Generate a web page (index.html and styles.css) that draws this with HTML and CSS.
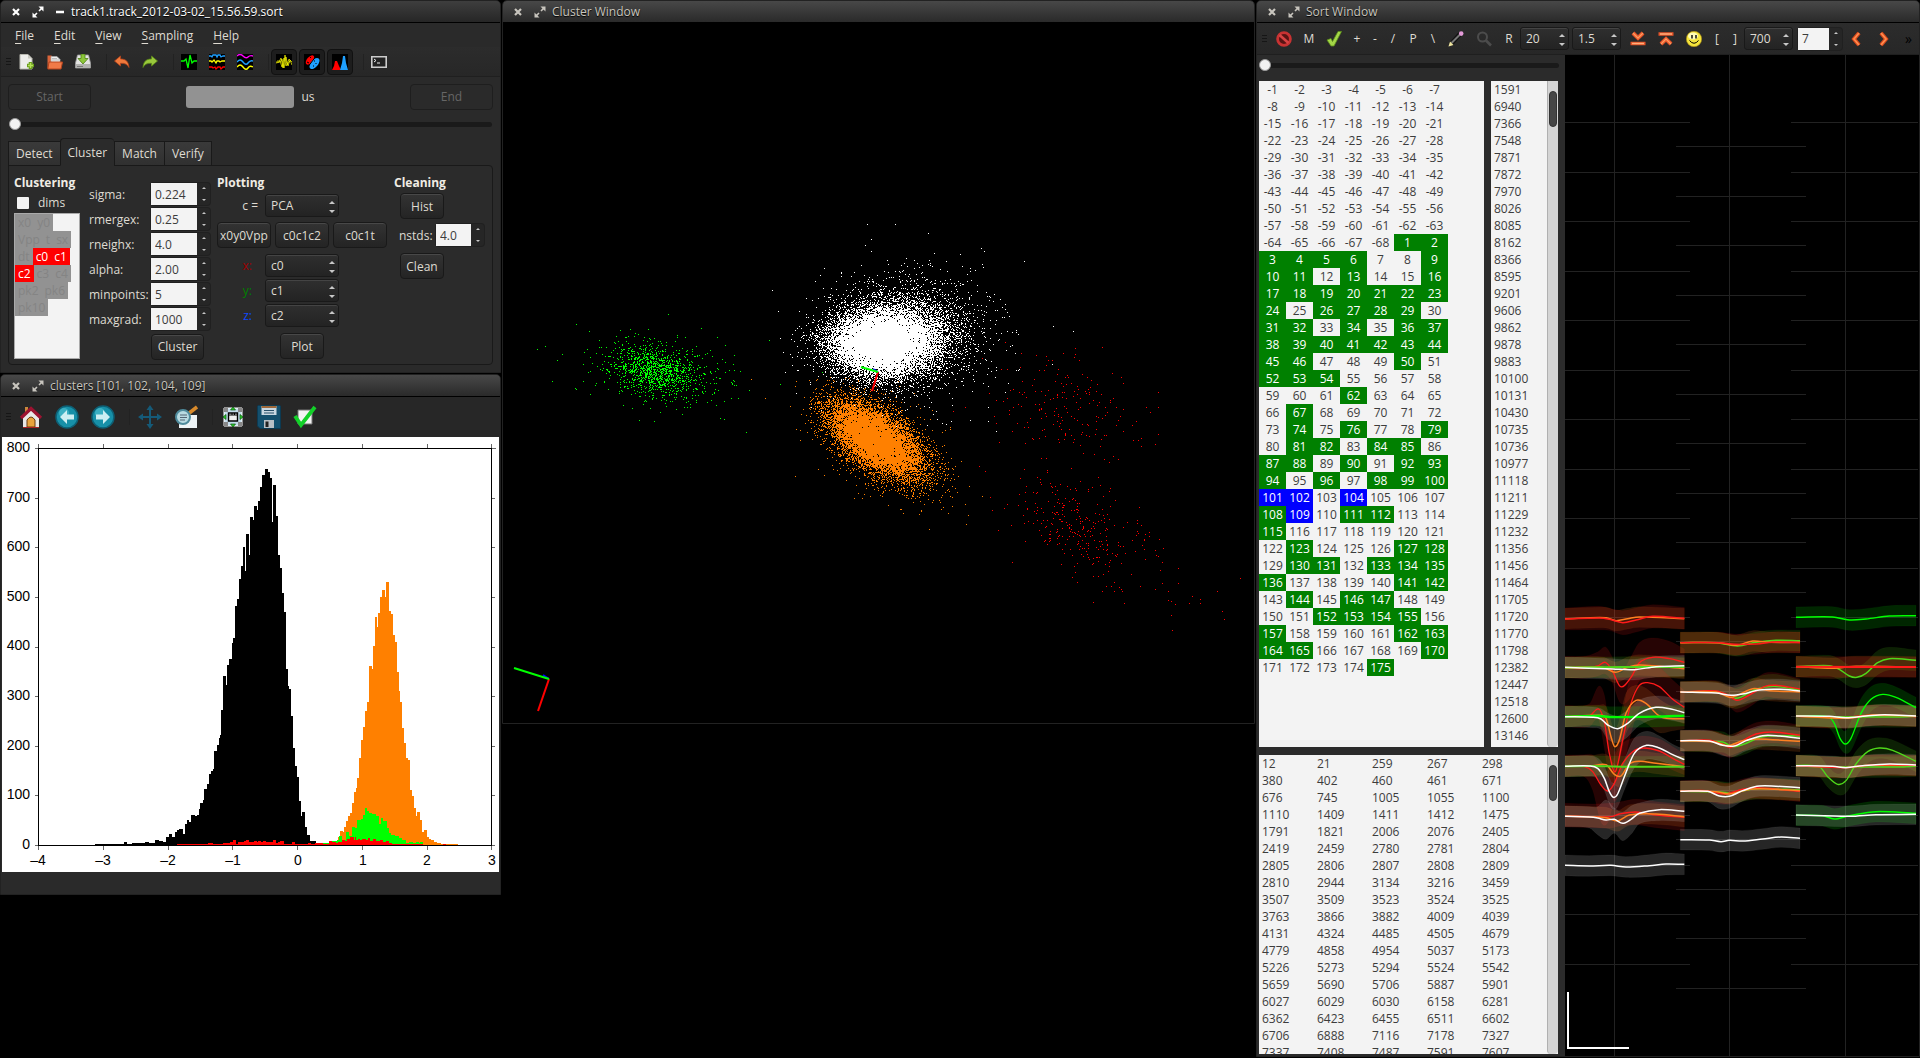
FILE: index.html
```html
<!DOCTYPE html>
<html lang="en">
<head>
<meta charset="utf-8">
<title>track1.track_2012-03-02_15.56.59.sort</title>
<link rel="stylesheet" href="styles.css">
</head>
<body>
<svg class="defs" aria-hidden="true">
  <symbol id="i-close" viewBox="0 0 10 10"><path d="M2 2l6 6M8 2l-6 6" stroke="currentColor" stroke-width="2.2"/></symbol>
  <symbol id="i-grow" viewBox="0 0 12 12"><path d="M6.500 0.500H11.500V5.500zM0.500 6.500V11.500H5.500z" fill="currentColor"/><path d="M9.500 2.500L7 5M2.500 9.500L5 7" stroke="currentColor" stroke-width="1.600"/></symbol>
  <symbol id="i-min" viewBox="0 0 10 10"><path d="M1 5h8" stroke="currentColor" stroke-width="2.400"/></symbol>
</svg>
<main class="desktop">
  <div class="side">
    <section class="window active">
      <header class="title"><svg><use href="#i-close"/></svg><svg class="big"><use href="#i-grow"/></svg><svg><use href="#i-min"/></svg><h1>track1.track_2012-03-02_15.56.59.sort</h1></header>
      <nav class="menu"><a href="#file"><u>F</u>ile</a><a href="#edit"><u>E</u>dit</a><a href="#view"><u>V</u>iew</a><a href="#sampling"><u>S</u>ampling</a><a href="#help"><u>H</u>elp</a></nav>
      <div class="toolbar">
        <span class="grip"></span>
        <button class="tool" aria-label="New"><svg viewBox="0 0 16 16"><path d="M1 .5h8l4 4V15H1z" fill="#ededea" stroke="#b8b8b0"/><path d="M9 .5v4h4z" fill="#c8c8c0"/><path d="M11.500 8v7M8 11.500h7" stroke="#6aa01c" stroke-width="3.600"/><path d="M11.500 9v5M9 11.500h5" stroke="#b6e05a" stroke-width="1.400"/></svg></button>
        <button class="tool" aria-label="Open"><svg viewBox="0 0 16 16"><path d="M.5 14V1.500h4l1 1.500H8V14z" fill="#d9643a"/><path d="M4 2.500h6l3 3V12H4z" fill="#eee" stroke="#aaa" stroke-width=".7"/><path d="M5 6h7M5 4.500h5" stroke="#bbb"/><path d="M2 8h13.500L14 15H.8z" fill="#f07a48" stroke="#b8441c"/></svg></button>
        <button class="tool" aria-label="Save"><svg viewBox="0 0 16 16"><path d="M2.500 1h11L15.500 9v5h-15V9z" fill="#e4e4e2" stroke="#999" stroke-width=".8"/><path d="M.8 10h14.400v4H.8z" fill="#b2b2b0"/><path d="M6 0h4v4.500h3L8 10 3 4.500h3z" fill="#8cc63a" stroke="#4d7d14" stroke-width=".8"/><path d="M2 12.500h6" stroke="#777"/></svg></button>
        <span class="sep"></span>
        <button class="tool" aria-label="Undo"><svg viewBox="0 0 16 16"><path d="M.5 7L6.500 2v3c5 0 8 2 8.500 8.500-1.500-3-4-4.500-8.500-4.200V12z" fill="#f07a3c" stroke="#b8441c" stroke-width=".8"/></svg></button>
        <button class="tool" aria-label="Redo"><svg viewBox="0 0 16 16"><path d="M15.500 7L9.500 2v3C4.500 5 1.500 7 1 13.500c1.500-3 4-4.500 8.500-4.200V12z" fill="#9ac83c" stroke="#5a8a18" stroke-width=".8"/></svg></button>
        <span class="sep"></span>
        <button class="tool" aria-label="Spikes"><svg viewBox="0 0 16 16"><path d="M0 0h16v16H0z"/><path d="M0 7h3l2-2 2 9 2-13 2 8 2-2h3" fill="none" stroke="#0f0" stroke-width="1.300"/></svg></button>
        <button class="tool" aria-label="Charts"><svg viewBox="0 0 16 16"><path d="M0 0h16v16H0z"/><g fill="none" stroke-width="1.300"><path d="M0 2h2l1 1 1-2h3l1 2 1-2h2l1 2 2-1h3" stroke="#1ea0ff"/><path d="M0 7h2l1 1 2-2 2 3 1-2h2l1 1 2-1h3" stroke="#ff0"/><path d="M0 13h3l1 1 2-1 1 2 2-2h2l1 2 2-2h2" stroke="#f00"/></g></svg></button>
        <button class="tool" aria-label="LFP"><svg viewBox="0 0 16 16"><path d="M0 0h16v16H0z"/><g fill="none" stroke-width="1.400"><path d="M0 2q3-3 6 0t5 1 5-1" stroke="#f0f"/><path d="M0 8q3-4 6 0t5 1 5-2" stroke="#1ea0ff"/><path d="M0 13q3-4 6 0t5 1 5-1" stroke="#ff0"/></g></svg></button>
        <span class="sep"></span>
        <button class="tool on" aria-label="Sort window"><svg viewBox="0 0 16 16"><path d="M0 0h16v16H0z"/><path d="M0 8h3l2-4 2 10L9 1l2 10 2-6 3 3M0 9l4-1 2-3 2 9 2-11 2 9 2-6 2 5M1 7h3l2 6 2-9 2 8 4-5" fill="none" stroke="#ff0" stroke-width=".7"/></svg></button>
        <button class="tool on" aria-label="Cluster window"><svg viewBox="0 0 16 16"><path d="M0 0h16v16H0z"/><ellipse cx="6" cy="6" rx="5.500" ry="3" transform="rotate(-50 6 6)" fill="#f00"/><ellipse cx="10.500" cy="9.500" rx="6.500" ry="3.600" transform="rotate(-50 10.500 9.500)" fill="#1ea0ff"/><path d="M3 14L13 1M3 8l2 1M6 3l1 1M10 7h1M12 9v1M9 12h1" stroke="#000"/></svg></button>
        <button class="tool on" aria-label="Histogram window"><svg viewBox="0 0 16 16"><path d="M0 0h16v16H0z"/><path d="M0 16l2-4 1-5h2l2 5 2 4z" fill="#f00"/><path d="M8 16l2-7 1-7h2l1 7 2 7z" fill="#1ea0ff"/></svg></button>
        <span class="sep"></span>
        <button class="tool" aria-label="Console"><svg viewBox="0 0 16 16"><path d="M.8 2.800h14.400v10.400H.8z" fill="#222" stroke="#ccc" stroke-width="1.600"/><path d="M3 5l2 1.500L3 8M6 9h3" fill="none" stroke="#eee"/></svg></button>
      </div>
      <div class="range">
        <button class="btn wide" disabled>Start</button>
        <label class="us"><input class="dead" disabled aria-label="Window position">us</label>
        <button class="btn wide" disabled>End</button>
      </div>
      <div class="slide"><input type="range" min="0" max="100" value="0" aria-label="Stream position"></div>
      <div class="tabs" role="tablist"><button role="tab">Detect</button><button role="tab" class="sel" aria-selected="true">Cluster</button><button role="tab">Match</button><button role="tab">Verify</button></div>
      <div class="panel">
        <div class="col">
          <h2>Clustering</h2>
          <label class="dims"><input type="checkbox">dims</label>
          <ul class="dimlist"><li>x0</li><li>y0</li><li>Vpp</li><li>t</li><li>sx</li><li>dt</li><li class="hot">c0</li><li class="hot">c1</li><li class="hot">c2</li><li>c3</li><li>c4</li><li>pk2</li><li>pk6</li><li>pk10</li></ul>
        </div>
        <div class="params">
          <label for="sigma">sigma:</label><span class="spin"><input id="sigma" value="0.224"></span>
          <label for="rmergex">rmergex:</label><span class="spin"><input id="rmergex" value="0.25"></span>
          <label for="rneighx">rneighx:</label><span class="spin"><input id="rneighx" value="4.0"></span>
          <label for="alpha">alpha:</label><span class="spin"><input id="alpha" value="2.00"></span>
          <label for="minpoints">minpoints:</label><span class="spin"><input id="minpoints" value="5"></span>
          <label for="maxgrad">maxgrad:</label><span class="spin"><input id="maxgrad" value="1000"></span>
          <button class="btn go">Cluster</button>
        </div>
        <div class="col">
          <h2>Plotting</h2>
          <div class="axis first"><label for="comp">c =</label><span class="combo"><select id="comp"><option>PCA</option></select></span></div>
          <div class="trio"><button class="btn">x0y0Vpp</button><button class="btn">c0c1c2</button><button class="btn">c0c1t</button></div>
          <div class="axes">
            <div class="axis"><label for="ax" class="x">x:</label><span class="combo"><select id="ax"><option>c0</option></select></span></div>
            <div class="axis"><label for="ay" class="y">y:</label><span class="combo"><select id="ay"><option>c1</option></select></span></div>
            <div class="axis"><label for="az" class="z">z:</label><span class="combo"><select id="az"><option>c2</option></select></span></div>
          </div>
          <button class="btn plot">Plot</button>
        </div>
        <div class="col clean">
          <h2>Cleaning</h2>
          <button class="btn">Hist</button>
          <div class="nstds"><label for="nstds">nstds:</label><span class="spin"><input id="nstds" value="4.0"></span></div>
          <button class="btn">Clean</button>
        </div>
      </div>
    </section>

    <section class="window">
      <header class="title"><svg><use href="#i-close"/></svg><svg class="big"><use href="#i-grow"/></svg><h1>clusters [101, 102, 104, 109]</h1></header>
      <div class="toolbar large">
        <span class="grip"></span>
        <button class="tool" aria-label="Home"><svg viewBox="0 0 24 24"><path d="M6 2h3v6H6z" fill="#c8893c"/><path d="M4 12l8-7 8 7v10.500H4z" fill="#e8e8e6"/><path d="M2 13L12 3.500 22 13" fill="none" stroke="#9c1230" stroke-width="3.200"/><path d="M8 22v-7q4-6 8 0v7z" fill="#e8a33c" stroke="#6a3a10"/><path d="M4 22.500h16" stroke="#a22" stroke-width="1.200"/></svg></button>
        <button class="tool" aria-label="Back"><svg viewBox="0 0 24 24"><circle cx="12" cy="12" r="11" fill="#1790a8" stroke="#0d5f74" stroke-width="1.500"/><circle cx="9" cy="8" r="5" fill="#54c4d4" opacity=".6"/><path d="M5 12l7-7v4.500h7v5h-7V19z" fill="#cdeef2"/></svg></button>
        <button class="tool" aria-label="Forward"><svg viewBox="0 0 24 24"><circle cx="12" cy="12" r="11" fill="#1790a8" stroke="#0d5f74" stroke-width="1.500"/><circle cx="9" cy="8" r="5" fill="#54c4d4" opacity=".6"/><path d="M19 12l-7-7v4.500H5v5h7V19z" fill="#cdeef2"/></svg></button>
        <span class="sep"></span>
        <button class="tool" aria-label="Pan"><svg viewBox="0 0 24 24"><path d="M12 2v20M2 12h20" stroke="#155a78" stroke-width="2"/><path d="M12 0l3.500 5h-7zM12 24l3.500-5h-7zM0 12l5-3.500v7zM24 12l-5-3.500v7z" fill="#155a78"/></svg></button>
        <button class="tool" aria-label="Zoom"><svg viewBox="0 0 24 24"><path d="M5 10h18v13H5z" fill="#eef4f6"/><path d="M14 9l9-7" stroke="#d98a2b" stroke-width="3.500"/><circle cx="9" cy="12" r="7" fill="#b9dbe2" stroke="#4f8b9c" stroke-width="2"/><path d="M6 10h7M6 12.500h7M6 15h5" stroke="#567" stroke-width="1.200"/></svg></button>
        <span class="sep"></span>
        <button class="tool" aria-label="Subplots"><svg viewBox="0 0 24 24"><path d="M3 3h18v18H3z" fill="#c4dcec" stroke="#fff"/><path d="M3 3h4v4H3zM17 3h4v4h-4zM3 17h4v4H3zM17 17h4v4h-4z" fill="#888"/><path d="M7.500 8h9v8h-9z" fill="#eee" stroke="#000" stroke-width="1.400"/><path d="M8 10h8M11 8v2M13.500 8v2" stroke="#000"/><path d="M12 2l2.500 3h-5zM12 22l2.500-3h-5zM2 12l3-2.500v5zM22 12l-3-2.500v5z" fill="#2ad02a" stroke="#084d08" stroke-width=".7"/></svg></button>
        <button class="tool" aria-label="Save figure"><svg viewBox="0 0 24 24"><path d="M.5 1.500q0-1 1-1h21q1 0 1 1v22H3l-2.500-2.500z" fill="#14506e" stroke="#0c3a52"/><path d="M4.500 1h15v9h-15z" fill="#c9d8e2"/><path d="M4.500 1h15v2h-15z" fill="#a06a3c"/><path d="M7 5.500h10M7 8h10" stroke="#29506a" stroke-width="1.200"/><path d="M7 15h10v8H7z" fill="#b9c0c6"/><path d="M8.500 16.500h3V22h-3z" fill="#222"/></svg></button>
        <button class="tool" aria-label="Options"><svg viewBox="0 0 24 24"><path d="M5 5h14v14H5z" fill="#f2f2f2" stroke="#777"/><path d="M2 11l6 9L22 2" fill="none" stroke="#12d028" stroke-width="3.800"/></svg></button>
      </div>
      <svg class="figure" viewBox="2 436 497 435" font-family="'Liberation Sans', Arial, sans-serif" font-size="14" role="img" aria-label="Cluster histogram">
        <g transform="translate(0 630) scale(.33333)" shape-rendering="crispEdges">
          <path d="M286 642V640H372V633H381V640H396V637H436V633H448V637H466V628H478V630H490V633H499V619H508V609H517V618H526V604H532V597H538V594H550V609H556V580H562V567H568V573H574V552H586V555H592V552H598V535H601V516H608V507H613V474H620V459H626V430H632V420H638V414H643V360H650V342H656V321H661V313H664V237H670V135H677V162H682V102H688V84H695V36H700V21H706V-75H712V-96H718V-156H724V-195H730V-252H735V-180H739V-291H747V-229H751V-342H759V-333H763V-375H771V-363H775V-390H781V-432H787V-468H796V-486H804V-476H810V-459H816V-327H819V-438H828V-345H835V-228H841V-189H846V-114H852V-57H858V114H865V165H868V174H873V255H879V351H885V405H891V438H897V510H903V555H907V543H915V588H921V612H930V630H948V636H985V642Z"/>
          <path fill="#ff8000" d="M970 642V636H1000V630H1013V618H1020V600H1030V604H1033V588H1038V570H1044V555H1050V546H1056V516H1062V483H1067V471H1071V441H1077V381H1083V327H1089V288H1095V240H1101V213H1107V105H1116V114H1119V45H1125V-42H1131V-12H1134V-54H1140V-102H1146V-123H1155V-102H1158V-147H1167V-60H1173V-51H1179V12H1185V33H1191V123H1197V180H1201V213H1206V291H1212V336H1218V381H1224V387H1230V477H1236V495H1242V531H1248V555H1252V543H1260V567H1266V603H1271V612H1273V597H1281V618H1287V624H1294V628H1302V632H1310V636H1323V640H1373V642Z"/>
          <path fill="#0f0" d="M950 642V636H990V630H1012V628H1018V616H1026V627H1037V604H1048V615H1056V588H1066V592H1071V568H1083V564H1089V552H1095V531H1102V540H1107V546H1117V550H1128V556H1138V579H1142V562H1148V570H1161V591H1167V606H1174V612H1186V615H1197V622H1207V628H1218V636H1226V633H1240V637H1248V634H1256V637H1260V634H1268V642Z"/>
          <path fill="red" d="M530 642V639H590V638H624V635H638V639H668V635H680V637H690V634H699V627H708V638H714V633H732V629H738V626H747V633H762V629H771V633H774V629H783V633H789V630H798V634H810V633H819V626H828V635H834V633H840V630H852V638H876V633H885V639H924V636H933V638H946V635H970V639H987V630H996V634H1008V637H1014V633H1026V627H1035V630H1041V624H1050V618H1062V628H1065V618H1068V627H1074V624H1080V627H1086V624H1098V627H1104V621H1110V630H1119V624H1128V630H1140V627H1149V633H1158V630H1167V636H1176V639H1215V640H1270V642ZM1328 642V639H1338V642Z"/>
        </g>
        <path fill="none" stroke="#000" d="M38.500 447.500H491.500V844.500H38.500z" shape-rendering="crispEdges"/>
        <path stroke="#000" stroke-opacity=".6" d="M35 447.500h4M35 497.500h4M35 546.500h4M35 596.500h4M35 646.500h4M35 695.500h4M35 745.500h4M35 794.500h4M35 844.500h4M491 447.500h5M491 497.500h4M491 546.500h4M491 596.500h4M491 646.500h4M491 695.500h4M491 745.500h4M491 794.500h4M491 844.500h4M38.500 443v4M103.500 443v4M168.500 443v4M232.500 443v4M297.500 443v4M362.500 443v4M427.500 443v4M491.500 443v4M38.500 845v4M103.500 845v4M168.500 845v4M232.500 845v4M297.500 845v4M362.500 845v4M427.500 845v4M491.500 845v4"/>
        <g text-anchor="end"><text x="30" y="451">800</text><text x="30" y="501">700</text><text x="30" y="550">600</text><text x="30" y="600">500</text><text x="30" y="649">400</text><text x="30" y="699">300</text><text x="30" y="749">200</text><text x="30" y="798">100</text><text x="30" y="848">0</text></g>
        <g text-anchor="middle"><text x="38" y="864">–4</text><text x="103" y="864">–3</text><text x="168" y="864">–2</text><text x="233" y="864">–1</text><text x="298" y="864">0</text><text x="363" y="864">1</text><text x="427" y="864">2</text><text x="492" y="864">3</text></g>
      </svg>
      <div class="status"></div>
    </section>
  </div>

  <section class="window cloud">
    <header class="title"><svg><use href="#i-close"/></svg><svg class="big"><use href="#i-grow"/></svg><h1>Cluster Window</h1></header>
    <canvas id="cloud" width="751" height="700"></canvas>
  </section>

  <section class="window sort">
    <header class="title"><svg><use href="#i-close"/></svg><svg class="big"><use href="#i-grow"/></svg><h1>Sort Window</h1></header>
    <div class="toolbar tight">
      <span class="grip"></span>
      <button class="tool" aria-label="Delete"><svg viewBox="0 0 16 16"><circle cx="8" cy="8" r="6.400" fill="#5a1414" stroke="#c83232" stroke-width="2.800"/><path d="M3.500 4l9 8" stroke="#d84444" stroke-width="2.600"/></svg></button>
      <button class="letter">M</button>
      <button class="tool" aria-label="Good"><svg viewBox="0 0 16 16"><path d="M1 9l4-1.500 1.500 3L12 .5h3.500L8 15H5z" fill="#a4d648" stroke="#5d8f1a" stroke-width=".8"/></svg></button>
      <button class="char">+</button><button class="char">-</button><button class="char">/</button><button class="letter">P</button><button class="char">\</button>
      <button class="tool" aria-label="Renumber"><svg viewBox="0 0 16 16"><path d="M3 13L12 3" stroke="#111" stroke-width="4.500"/><path d="M3.500 12L12 3.500" stroke="#777" stroke-width="2"/><circle cx="13.200" cy="2.600" r="2.300" fill="#e39ad8"/><path d="M.5 15.500l1.500-5 3.500 3.500z" fill="#f0e6a0"/></svg></button>
      <button class="tool" aria-label="Find"><svg viewBox="0 0 16 16"><circle cx="6.500" cy="6" r="4.500" fill="none" stroke="#4c4c4c" stroke-width="2"/><path d="M10 9.500l5 5" stroke="#4c4c4c" stroke-width="2.600"/></svg></button>
      <button class="letter">R</button>
      <span class="combo num"><select aria-label="Samples"><option>20</option></select></span>
      <span class="combo num"><select aria-label="Gain"><option>1.5</option></select></span>
      <button class="tool" aria-label="Align minimum"><svg viewBox="0 0 16 16"><path d="M3 2l5 5 5-5" fill="none" stroke="#e8552a" stroke-width="4"/><path d="M3 2l5 5 5-5" fill="none" stroke="#ff9a5e" stroke-width="1.400"/><path d="M0.500 12.500h15" stroke="#e8552a" stroke-width="3.600"/><path d="M2 12.500h12" stroke="#ffae7a" stroke-width="1.400"/></svg></button>
      <button class="tool" aria-label="Align maximum"><svg viewBox="0 0 16 16"><path d="M3 13l5-5 5 5" fill="none" stroke="#e8552a" stroke-width="4"/><path d="M3 13l5-5 5 5" fill="none" stroke="#ff9a5e" stroke-width="1.400"/><path d="M0.500 3h15" stroke="#e8552a" stroke-width="3.600"/><path d="M2 3h12" stroke="#ffae7a" stroke-width="1.400"/></svg></button>
      <button class="tool" aria-label="Best align"><svg viewBox="0 0 16 16"><circle cx="8" cy="8" r="7.700" fill="#f6e53c" stroke="#a88a10" stroke-width=".6"/><ellipse cx="7" cy="5" rx="5" ry="3.500" fill="#fffbb8"/><path d="M6 4v3.500M10 4v3.500" stroke="#000" stroke-width="1.400"/><path d="M3.500 9.500q4.500 5.500 9 0" fill="none" stroke="#000"/></svg></button>
      <button class="char">[</button><button class="char">]</button>
      <span class="combo num"><select aria-label="Shift"><option>700</option></select></span>
      <span class="spin"><input aria-label="Step" value="7"></span>
      <button class="tool" aria-label="Previous"><svg viewBox="0 0 16 16"><path d="M11 2L6 8l5 6" fill="none" stroke="#d8481c" stroke-width="4"/><path d="M11 2L6 8l5 6" fill="none" stroke="#ff8a4c" stroke-width="1.800"/></svg></button>
      <button class="tool" aria-label="Next"><svg viewBox="0 0 16 16"><path d="M5 2l5 6-5 6" fill="none" stroke="#d8481c" stroke-width="4"/><path d="M5 2l5 6-5 6" fill="none" stroke="#ff8a4c" stroke-width="1.800"/></svg></button>
      <button class="more" aria-label="More tools">»</button>
    </div>
    <div class="body">
      <div class="lists">
        <div class="slide small"><input type="range" min="0" max="100" value="0" aria-label="Spike position"></div>
        <div class="pair">
          <div class="list neurons"><table id="neurons"></table></div>
          <div class="list spikes"><table id="spikes"></table><span class="bar"><i></i></span></div>
        </div>
        <div class="list unsorted"><table id="unsorted"></table><span class="bar"><i></i></span></div>
      </div>
      <svg id="waves" viewBox="1565 55 354 1001" role="img" aria-label="Spike waveforms"></svg>
    </div>
  </section>
</main>
<script src="script.js"></script>
</body>
</html>
```
FILE: styles.css
```css
* { box-sizing: border-box; }
body { margin: 0; background: #000; color: #dfdbd2; font: 12px/17px "Open Sans", "Noto Sans", sans-serif; }
h1, h2, ul { margin: 0; padding: 0; }
button, input, select { font: inherit; color: inherit; margin: 0; }
button { padding: 0; border: 0; background: none; }
.defs { display: none; }

.desktop { display: grid; grid-template-columns: 501px minmax(0, 1fr) 664px; column-gap: 1px; align-items: start; min-height: 100vh; }
.side { display: grid; row-gap: 1px; }
.window { border: 1px solid #222; border-radius: 5px 5px 0 0; background: #2a2a2a; overflow: hidden; }
.title { display: flex; align-items: center; gap: 11px; height: 22px; padding-left: 10px; background: linear-gradient(#484848, #2a2a2a); border-bottom: 1px solid #000; color: #c8c5be; }
.title svg { width: 10px; height: 10px; flex: none; }
.title .big { width: 12px; height: 12px; }
.title h1 { margin-left: -5px; font-size: 12px; font-weight: 500; text-shadow: 0 1px 1px #000; }
.active .title { color: #fff; background: linear-gradient(#3e3e3e, #262626); }

.menu { display: flex; gap: 20px; height: 24px; align-items: center; padding-left: 14px; }
.menu a { color: inherit; text-decoration: none; }
.menu u { text-underline-offset: 3px; }

.toolbar { display: flex; align-items: center; gap: 2px; height: 30px; padding-left: 5px; border-bottom: 1px solid #1f1f1f; background: linear-gradient(#2c2c2c, #272727); }
.grip { width: 5px; height: 8px; margin-right: 1px; background: repeating-linear-gradient(#161616 0 1px, transparent 1px 3px); }
.tool { display: grid; place-items: center; width: 26px; height: 26px; flex: none; }
.tool svg { width: 16px; height: 16px; }
.tool.on { background: #1d1d1d; border: 1px solid #111; border-radius: 4px; }
.sep { width: 9px; height: 16px; border-right: 1px solid #222; }
.large { height: 40px; gap: 0; padding-left: 5px; background: #272727; border: 0; }
.large .grip { margin-right: 2px; }
.large .tool { width: 36px; }
.large .tool svg { width: 24px; height: 24px; }
.large .sep { margin-right: 2px; }
.tight { height: 32px; gap: 0; }
.tight .grip { margin-right: 3px; }
.tight .tool { width: 28px; }
.letter { width: 22px; }
.char { width: 18px; }
.more { flex: 1; font-size: 14px; color: #000; }

.btn { height: 26px; border: 1px solid #191919; border-radius: 4px; background: linear-gradient(#333, #242424); box-shadow: inset 0 1px #484848; }
.btn:disabled { color: #666; background: #2a2a2a; box-shadow: none; border-color: #1e1e1e; }
.wide { width: 83px; }
.range { display: flex; justify-content: space-between; align-items: center; padding: 6px 7px 0; height: 33px; }
.us { display: flex; align-items: center; gap: 7px; }
.dead { width: 108px; height: 22px; border: 0; border-radius: 3px; background: #929292; }

.slide { padding: 0 8px; height: 28px; display: flex; align-items: center; }
.slide input { appearance: none; width: 100%; height: 5px; border-radius: 3px; background: #1a1a1a; }
.slide input::-webkit-slider-thumb { appearance: none; width: 12px; height: 12px; border-radius: 50%; background: #f3f3f3; border: 1px solid #999; }
.slide.small { padding: 0 6px 6px 0; height: 26px; }

.tabs { display: flex; align-items: flex-end; height: 28px; padding-left: 7px; position: relative; z-index: 1; margin-bottom: -1px; }
.tabs button { height: 25px; padding: 0 7px; border: 1px solid #191919; border-right-width: 0; background: linear-gradient(#3a3a3a, #303030); }
.tabs button:last-child { border-right-width: 1px; }
.tabs .sel { height: 28px; background: #2b2b2b; border-bottom-color: #2b2b2b; border-radius: 4px 4px 0 0; }
.panel { display: grid; grid-template-columns: 68px 121px 170px 90px; column-gap: 7px; margin: 0 7px 7px; padding: 8px 5px 4px; border: 1px solid #191919; border-radius: 0 4px 4px 4px; background: #2b2b2b; height: 200px; }
h2 { font-size: 12px; line-height: 18px; font-weight: 700; color: #f0ece4; }
.col { display: flex; flex-direction: column; }
.dims { display: flex; align-items: center; gap: 9px; height: 19px; padding-left: 3px; margin-top: 1px; }
.dims input { appearance: none; width: 12px; height: 12px; border-radius: 1px; background: #f3f3f3; }
.dimlist { list-style: none; display: flex; flex-wrap: wrap; align-content: flex-start; width: 66px; height: 146px; margin-top: 1px; border: 1px solid #aaa; background: #f3f3f3; }
.dimlist li { padding: 0 3px; background: #929292; color: #848484; }
.dimlist .hot { background: #f00; color: #fff; }
.params { display: grid; grid-template-columns: 62px 59px; grid-auto-rows: 22px; row-gap: 3px; align-items: center; margin-top: 9px; align-content: start; }
.spin { display: flex; position: relative; height: 22px; padding-right: 13px; border-radius: 3px; background: #262626; box-shadow: 0 0 0 1px #202020; }
.spin input { width: 100%; min-width: 0; height: 22px; padding: 0 4px; border: 0; background: #f3f3f3; color: #3c3c3c; }
.spin::before, .spin::after, .combo::before, .combo::after { content: ""; position: absolute; right: 4px; border: 2px solid transparent; }
.spin::before { top: 4px; border-bottom-color: #c8c8c8; border-top: 0; }
.spin::after { bottom: 4px; border-top-color: #c8c8c8; border-bottom: 0; }
.combo { display: block; position: relative; width: 74px; }
.combo select { appearance: none; width: 100%; height: 23px; padding: 0 5px; border: 1px solid #191919; border-radius: 3px; background: linear-gradient(#2f2f2f, #232323); box-shadow: inset 0 1px #444; }
.combo::before, .combo::after { border-width: 3px; }
.combo::before { top: 7px; border-top: 0; border-bottom-color: #c8c8c8; }
.combo::after { bottom: 4px; border-bottom: 0; border-top-color: #c8c8c8; }
.combo.num { width: 49px; margin-right: 3px; }
.tight .spin { width: 44px; margin-left: 2px; }
.go { grid-column: 2; width: 53px; margin-top: 5px; }
.axis { display: grid; grid-template-columns: 27px 74px; column-gap: 7px; padding-left: 14px; align-items: center; text-align: right; }
.axis select { text-align: left; }
.first { margin-top: 2px; }
.trio { display: grid; grid-template-columns: repeat(3, 54px); gap: 4px; margin: 5px 0 6px; }
.axes { display: grid; row-gap: 2px; }
.axes .x { color: #a00000; } .axes .y { color: #008000; } .axes .z { color: #1048ff; }
.axes label { padding-right: 6px; }
.plot { width: 44px; margin: 6px 0 0 63px; }
.clean .btn { width: 44px; margin-left: 6px; }
.clean h2 { margin-bottom: 1px; }
.nstds { display: grid; grid-template-columns: 37px 48px; padding-left: 5px; align-items: center; margin: 5px 0 7px; }

.figure { display: block; width: calc(100% - 2px); margin: 0 1px; background: #fff; }
.status { height: 22px; }
#cloud { display: block; width: 100%; background: #000; }
.cloud { background: #000; }

.body { display: flex; }
.lists { width: 308px; padding-left: 2px; flex: none; background: #2b2b2b; display: flex; flex-direction: column; }
#waves { flex: 1; min-width: 0; align-self: flex-start; background: #000; }
.pair { display: flex; gap: 7px; height: 666px; }
.list { display: flex; justify-content: space-between; overflow: hidden; background: #f3f3f3; color: #3c3c3c; }
.neurons { width: 225px; }
.spikes { width: 67px; }
.unsorted { width: 299px; height: 299px; margin-top: 8px; }
.list table { border-collapse: collapse; align-self: flex-start; }
.list td { height: 17px; padding: 0; line-height: 17px; }
.neurons td { width: 27px; text-align: center; }
.neurons .g { background: #008000; color: #fff; }
.neurons .b { background: #00f; color: #fff; }
.spikes td { padding-left: 3px; }
.unsorted td { width: 55px; padding-left: 3px; }
.bar { width: 11px; flex: none; padding: 10px 1px; background: #d4d4d4; border-left: 1px solid #b0b0b0; border-radius: 0 0 4px 4px; }
.bar i { display: block; height: 36px; border-radius: 4px; background: #464646; border: 1px solid #333; }
```
FILE: script.js
```js
// Fill the neuron, spike and unsorted lists.
const greens = new Set();
'1-6 9-11 13 16-24 26-29 31-32 34 36-46 50 52-54 62 67 74 76 79 81-82 84-85 87-88 90 92-94 96 98-100 108 111-112 115 123 127-128 130-131 133-136 141-142 144 146-147 152-155 157 162-165 170 175'
  .split(' ').forEach(r => { const [a, b = a] = r.split('-'); for (let i = +a; i <= +b; i++) greens.add(i); });
const blues = new Set([101, 102, 104, 109]);
const ids = [];
for (let i = 1; i <= 68; i++) ids.push(-i);
for (let i = 1; i <= 175; i++) ids.push(i);

function fill(id, values, columns) {
  const table = document.getElementById(id);
  values.forEach((v, i) => {
    const row = i % columns ? table.rows[table.rows.length - 1] : table.insertRow();
    const cell = row.insertCell();
    cell.textContent = v;
    if (id === 'neurons') cell.className = greens.has(v) ? 'g' : blues.has(v) ? 'b' : '';
  });
}
fill('neurons', ids, 7);
fill('spikes', '1591 6940 7366 7548 7871 7872 7970 8026 8085 8162 8366 8595 9201 9606 9862 9878 9883 10100 10131 10430 10735 10736 10977 11118 11211 11229 11232 11356 11456 11464 11705 11720 11770 11798 12382 12447 12518 12600 13146'.split(' '), 1);
fill('unsorted', '12 21 259 267 298 380 402 460 461 671 676 745 1005 1055 1100 1110 1409 1411 1412 1475 1791 1821 2006 2076 2405 2419 2459 2780 2781 2804 2805 2806 2807 2808 2809 2810 2944 3134 3216 3459 3507 3509 3523 3524 3525 3763 3866 3882 4009 4039 4131 4324 4485 4505 4679 4779 4858 4954 5037 5173 5226 5273 5294 5524 5542 5659 5690 5706 5887 5901 6027 6029 6030 6158 6281 6362 6423 6455 6511 6602 6706 6888 7116 7178 7327 7337 7408 7487 7591 7607'.split(' '), 5);

// Point cloud: rotated normal distributions, one pixel for each spike.
const ctx = document.getElementById('cloud').getContext('2d');
ctx.translate(-503, -23);
let seed = 7;
const rnd = () => { seed = (seed * 1664525 + 1013904223) >>> 0; return (seed + 1) / 4294967297; };
function blob(color, n, cx, cy, sx, sy, deg) {
  ctx.fillStyle = color;
  const c = Math.cos(deg * Math.PI / 180), s = Math.sin(deg * Math.PI / 180);
  for (let i = 0; i < n; i++) {
    const r = Math.sqrt(-2 * Math.log(rnd())), t = 2 * Math.PI * rnd();
    const u = r * Math.cos(t) * sx, v = r * Math.sin(t) * sy;
    ctx.fillRect(Math.round(cx + u * c - v * s), Math.round(cy + u * s + v * c), 1, 1);
  }
}
blob('#f00', 150, 1057, 403, 34, 24, 20);
blob('#f00', 60, 1095, 430, 34, 45, 0);
blob('#f00', 220, 1070, 525, 38, 18, 28);
blob('#f00', 90, 1110, 548, 55, 22, 30);
blob('#0f0', 850, 655, 370, 20, 11, 12);
blob('#0f0', 420, 664, 373, 38, 17, 10);
blob('#0f0', 40, 645, 364, 65, 24, 0);
blob('#fff', 15000, 882, 343, 24, 14, 0);
blob('#fff', 5800, 893, 336, 32, 21, -8);
blob('#fff', 1200, 914, 335, 42, 34, 0);
blob('#ff8000', 9500, 874, 438, 25, 12, 36);
blob('#ff8000', 2800, 882, 444, 32, 17, 36);
blob('#ff8000', 60, 872, 434, 44, 28, 30);
function axis(x, y, ends) {
  ctx.lineWidth = 2;
  [['#00f', ends[0]], ['#f00', ends[1]], ['#0f0', ends[2]]].forEach(([c, e]) => {
    ctx.strokeStyle = c; ctx.beginPath(); ctx.moveTo(x, y); ctx.lineTo(e[0], e[1]); ctx.stroke();
  });
}
axis(878, 372, [[873, 369], [872, 391], [861, 367]]);
axis(549, 679, [[543, 675], [538, 711], [514, 668]]);

// Waveform panel: faint grid, scale bar, then mean traces with their error bands.
const R = '#ff1a1a', O = '#ff8020', G = '#00ff00', W = '#ffffff', L = '#4fd81a';
let out = '<g stroke="#222" fill="none">';
for (const x of [1614.5, 1729.5, 1845.5]) out += `<path d="M${x} 55V1056"/>`;
for (let i = 0; i < 18; i++) {
  const y = Math.round(122 + 49.53 * i) + .5, m = Math.round(146 + 49.53 * i) + .5;
  out += `<path d="M1565 ${y}H1690M1791 ${y}H1918M1676 ${m}H1806"/>`;
}
out += '</g><g transform="translate(1556 590) scale(.33333)">';
const smooth = p => p.map((q, i) => {
  if (!i) return 'M' + q;
  const a = p[Math.max(i - 2, 0)], b = p[i - 1], d = p[Math.min(i + 1, p.length - 1)];
  const h = (q[0] - b[0]) / 3;
  const s1 = (q[1] - a[1]) / (q[0] - a[0]) || 0, s2 = (d[1] - b[1]) / (d[0] - b[0]) || 0;
  return `C${b[0] + h} ${b[1] + s1 * h} ${q[0] - h} ${q[1] - s2 * h} ${q}`;
}).join('');
// Each trace: colour, then "x,y[,up[,down]]" points, then the line width.
const bands = [], lines = [];
function trace(color, text, width = 4.5) {
  const p = text.split(' ').map(s => s.split(',').map(Number));
  const top = smooth(p.map(([x, y, u = 31]) => [x, y - u]));
  const bottom = smooth(p.map(([x, y, u = 31, d = u]) => [x, y + d]).reverse()).replace('M', 'L');
  bands.push(`<path fill="${color}" fill-opacity=".15" stroke="${color}" stroke-opacity=".15" d="${top}${bottom}Z"/>`);
  lines.push(`<path fill="none" stroke="${color}" stroke-width="${width}" d="${smooth(p.map(q => q.slice(0, 2)))}"/>`);
}
trace(O, '27,86 150,83 180,92 215,86 250,81 385,86');
trace(R, '27,87,33 130,84,35 160,88,33 200,98,36 240,90,36 290,79,35 385,85,33');
trace(R, '27,235,36,28 90,235,37,30 125,228,42,30 148,217,46,35 168,240,40,35 194,290,40,50 225,262,62,60 250,218,60,55 290,202,58,60 340,206,52,55 385,217,40,45', 4);
trace(O, '27,233 140,232 178,247 215,232 250,225 385,236');
trace(L, '27,233 120,232 200,231 385,231', 6);
trace(W, '27,232 170,237 235,239 300,230 385,227');
trace(R, '27,380,34,30 100,378,36,32 128,357,68,32 145,395,80,80 160,490,80,80 178,545,60,90 200,450,80,90 225,340,90,90 250,286,80,70 275,278,60,70 310,290,58,70 350,328,58,60 385,352,50,50', 4);
trace(O, '27,380 130,376 150,385,36,50 165,440,45,60 176,470,50,60 190,450,60,60 210,370,60,60 240,331,45,60 270,340,45,60 310,378,50,50 350,386,36 385,386');
trace(G, '27,380 130,378 160,381 300,380 385,377', 7);
trace(W, '27,380 110,382 135,387 155,405,36,42 185,416,38,42 215,400,40,40 250,370,40,36 300,352,34,34 345,357,34 385,368');
trace(R, '27,529,34,30 85,530,36,30 110,545,50,55 135,585,60,110 155,603,60,95 175,580,80,50 200,520,60,40 230,485,40,50 260,474,36,50 310,483,36 350,505,35 385,523', 4);
trace(O, '27,529 110,527 150,524 175,553 195,558 220,522 250,514 300,520 385,530');
trace(L, '27,529 110,528 200,530 385,530', 6);
trace(W, '27,529 100,528 125,535 145,565,36,36 160,605,40,36 172,622,42,36 185,612,50,38 205,560,50,40 235,490,45,44 272,466,42,42 310,474,36,38 350,494 385,509');
trace(R, '27,678,38,33 110,680,38,33 165,680,40,34 190,672,36,36 240,666,38,38 300,675,40,38 385,682,38,40', 4);
trace(O, '27,678 150,683 185,693 220,675 300,672 385,680');
trace(W, '27,679 100,681,31,33 125,684,34,50 150,690,60,58 175,688,34,42 200,700,34,52 225,688,40,45 250,670 310,659,31,33 385,664');
trace(W, '27,826 100,828 165,826 210,831 280,827,33 330,822,33 385,823');

trace(L, '373,158 480,158 545,168 600,157 660,151 732,152');
trace(O, '373,158 490,158 540,166 590,153 640,157 732,157');
trace(R, '373,158 490,158 535,163 600,162 660,156 732,158');
trace(L, '373,306 490,306 540,325 600,298,36 655,289,36 732,300');
trace(R, '373,306 480,303 515,315 543,331,33,36 580,315,36,36 625,290,40,31 660,286,38 732,297');
trace(O, '373,306 480,306 520,322 545,316 590,296 640,302 732,306');
trace(W, '373,306 480,309 525,316 560,312 610,300 670,298 732,303');
trace(L, '373,453 500,456 530,470 565,462 620,440 732,438');
trace(R, '373,453 460,451 500,463 525,472 560,452,34,31 600,432,34 650,426,33 732,436');
trace(O, '373,452 480,457 515,467 560,452 600,447 732,454');
trace(W, '373,452 460,453 500,466 535,468 570,452 620,437 670,438 732,445');
trace(L, '373,604 480,605 530,608 600,596 732,600');
trace(R, '373,603 450,602 505,612 560,598 600,593 732,604');
trace(O, '373,604 480,605 520,612 590,597 732,602');
trace(W, '373,604 455,604 490,618,31,38 520,619,31,36 560,602 610,588 732,593');
trace(W, '373,749 460,750 495,755 520,751 560,753 620,747 675,741 732,745');

trace(G, '720,82 830,81 880,90 930,87 1000,78 1080,77');
trace(L, '720,230 820,227 850,238 880,258 903,262 930,250,34 965,218,36 1000,206,34 1080,211');
trace(O, '720,230 830,235 900,229 1080,231');
trace(R, '720,230 900,231 1080,231', 6);
trace(G, '720,378 815,380 835,400,33 852,445,36,28 868,462,38,28 885,445,50,36 915,370,44,44 945,328,38,36 980,313,33 1020,322 1080,353', 4);
trace(R, '720,379 860,382 950,376 1080,380');
trace(L, '720,378 780,380 1030,381 1080,379');
trace(O, '720,378 870,385 950,375 1080,378');
trace(W, '720,378 820,379 870,383 930,378 985,374 1080,378');
trace(L, '720,526 790,530 815,560 845,583 870,572,36 900,522,38 935,485,34 970,474 1010,481 1080,514', 4);
trace(O, '720,527 860,532 950,526 1080,528');
trace(L, '720,527 780,530 1030,531 1080,528');
trace(R, '720,527 870,533 950,525 1080,526');
trace(W, '720,527 830,529 870,533 920,527 1000,522 1080,525');
trace(G, '720,676 800,677 835,687 880,677 960,665 1080,670');
trace(W, '720,675 880,679 960,674 1080,673');
out += bands.join('') + lines.join('') + '</g>';
out += '<path fill="none" stroke="#fff" stroke-width="2" d="M1568 992V1048H1629"/>';
document.getElementById('waves').innerHTML = out;
```
